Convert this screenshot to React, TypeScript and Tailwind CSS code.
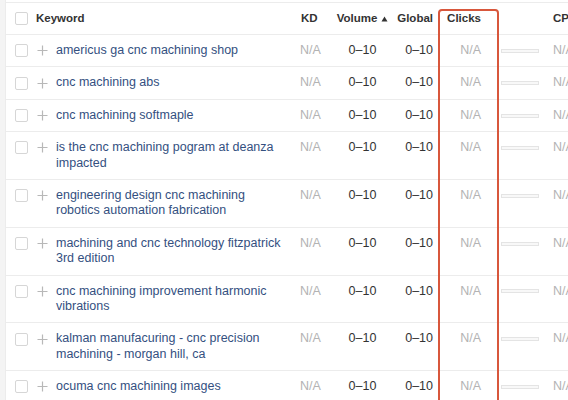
import React from "react";

const rows: string[][] = [
  ["americus ga cnc machining shop"],
  ["cnc machining abs"],
  ["cnc machining softmaple"],
  ["is the cnc machining pogram at deanza", "impacted"],
  ["engineering design cnc machining", "robotics automation fabrication"],
  ["machining and cnc technology fitzpatrick", "3rd edition"],
  ["cnc machining improvement harmonic", "vibrations"],
  ["kalman manufacuring - cnc precision", "machining - morgan hill, ca"],
  ["ocuma cnc machining images"],
];

function Checkbox() {
  return <div className="w-[13px] h-[13px] shrink-0 rounded-[2px] border border-[#d6d6d6] bg-white" />;
}

function Plus() {
  return (
    <svg width="13" height="13" viewBox="0 0 13 13" className="shrink-0">
      <path d="M6.5 1.5v10M1.5 6.5h10" stroke="#b8b8b8" strokeWidth="1.2" />
    </svg>
  );
}

export default function App() {
  return (
    <div
      className="relative w-[568px] h-[400px] overflow-hidden bg-white flex"
      style={{ fontFamily: '"Liberation Sans", Arial, Helvetica, sans-serif' }}
    >
      <div className="w-[6px] shrink-0 bg-[#f4f4f4] border-r border-[#ececec]" />
      <div className="flex-1 pt-[2px]">
        <div className="border-t border-[#ececec]">
          {/* header */}
          <div className="flex items-center h-[32px] border-b border-[#ececec] text-[11.5px] font-bold text-[#333] whitespace-nowrap">
            <div className="pl-[9px] w-[30px] shrink-0 flex">
              <Checkbox />
            </div>
            <div className="w-[256px] shrink-0">Keyword</div>
            <div className="w-[38px] shrink-0 pl-[9px]">KD</div>
            <div className="w-[65px] shrink-0 flex justify-center items-center gap-[4px]">
              <span>Volume</span>
              <svg width="7" height="6" viewBox="0 0 7 6">
                <path d="M3.5 0.5L6.5 5.5H0.5Z" fill="#333" />
              </svg>
            </div>
            <div className="w-[38px] shrink-0 text-right">Global</div>
            <div className="w-[66px] shrink-0 text-right pr-[18px]">Clicks</div>
            <div className="w-[54px] shrink-0" />
            <div className="shrink-0">CPC</div>
          </div>
          {rows.map((lines, i) => (
            <div
              key={i}
              className="flex items-start py-2 border-b border-[#ececec] text-[12.5px] leading-[15.4px] whitespace-nowrap"
            >
              <div className="pl-[9px] w-[50px] shrink-0 flex items-center h-[15.4px] gap-[8px]">
                <Checkbox />
                <Plus />
              </div>
              <div className="w-[236px] shrink-0 text-[#34507f]">
                {lines.map((l, j) => (
                  <div key={j}>{l}</div>
                ))}
              </div>
              <div className="w-[38px] shrink-0 pl-[8px] text-[#b3b3b3]">N/A</div>
              <div className="w-[65px] shrink-0 text-center text-[#333]">0–10</div>
              <div className="w-[38px] shrink-0 text-right text-[#333]">0–10</div>
              <div className="w-[66px] shrink-0 text-right pr-[18px] text-[#b3b3b3]">N/A</div>
              <div className="w-[54px] shrink-0 h-[15.4px] flex items-center pl-[2px]">
                <div className="w-[38px] h-[4px] border border-[#e4e4e4] bg-[#f8f8f8]" />
              </div>
              <div className="shrink-0 text-[#b3b3b3]">N/A</div>
            </div>
          ))}
        </div>
      </div>
      <div className="absolute left-[438px] top-[9px] w-[61px] h-[420px] border-2 border-[#d8573c] rounded-[4px] pointer-events-none" />
    </div>
  );
}
